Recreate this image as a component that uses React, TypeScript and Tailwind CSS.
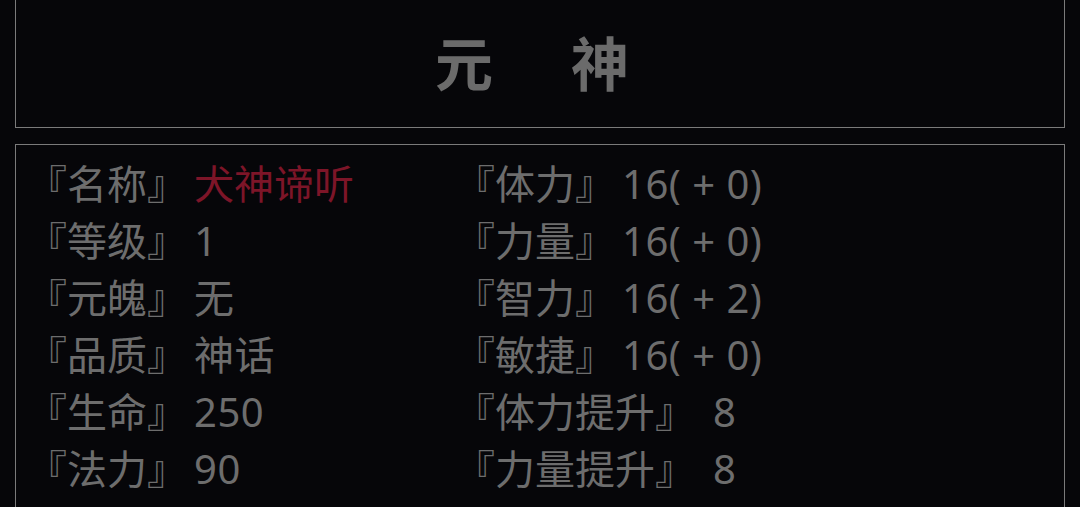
import React from 'react';

type Stat = { label: string; value: string; accent?: boolean; gap?: boolean };

const leftStats: Stat[] = [
  { label: '名称', value: '犬神谛听', accent: true },
  { label: '等级', value: '1' },
  { label: '元魄', value: '无' },
  { label: '品质', value: '神话' },
  { label: '生命', value: '250' },
  { label: '法力', value: '90' },
  { label: '速度', value: '16' },
];

const rightStats: Stat[] = [
  { label: '体力', value: '16( + 0)' },
  { label: '力量', value: '16( + 0)' },
  { label: '智力', value: '16( + 2)' },
  { label: '敏捷', value: '16( + 0)' },
  { label: '体力提升', value: '8', gap: true },
  { label: '力量提升', value: '8', gap: true },
  { label: '智力提升', value: '8', gap: true },
];

const StatRow: React.FC<{ stat: Stat }> = ({ stat }) => (
  <div className="whitespace-pre">
    『{stat.label}』
    <span className={stat.accent ? 'ml-[7px] text-[#7d1528]' : 'ml-[7px] tracking-[0.5px]'}>
      {stat.gap ? ' ' + stat.value : stat.value}
    </span>
  </div>
);

const App: React.FC = () => {
  return (
    <div
      className="h-[507px] w-[1080px] overflow-hidden bg-[#060609] px-[15px] text-[#6d6d6d]"
      style={{ fontFamily: '"Noto Sans", "Noto Sans CJK SC", sans-serif' }}
    >
      {/* header panel */}
      <div className="flex h-[128px] items-center justify-center border-x border-b border-[#7a7a7a] pr-4">
        <h1 className="flex gap-[78px] text-[58px] font-bold leading-none text-[#6b6b6b]">
          <span>元</span>
          <span>神</span>
        </h1>
      </div>

      {/* stats panel */}
      <div className="mt-[16px] h-[400px] border border-[#7a7a7a] pl-[11px] pt-[10px] text-[40px] leading-[57px]">
        <div className="flex">
          <div className="w-[428px]">
            {leftStats.map((s) => (
              <StatRow key={s.label} stat={s} />
            ))}
          </div>
          <div>
            {rightStats.map((s) => (
              <StatRow key={s.label} stat={s} />
            ))}
          </div>
        </div>
      </div>
    </div>
  );
};

export default App;
